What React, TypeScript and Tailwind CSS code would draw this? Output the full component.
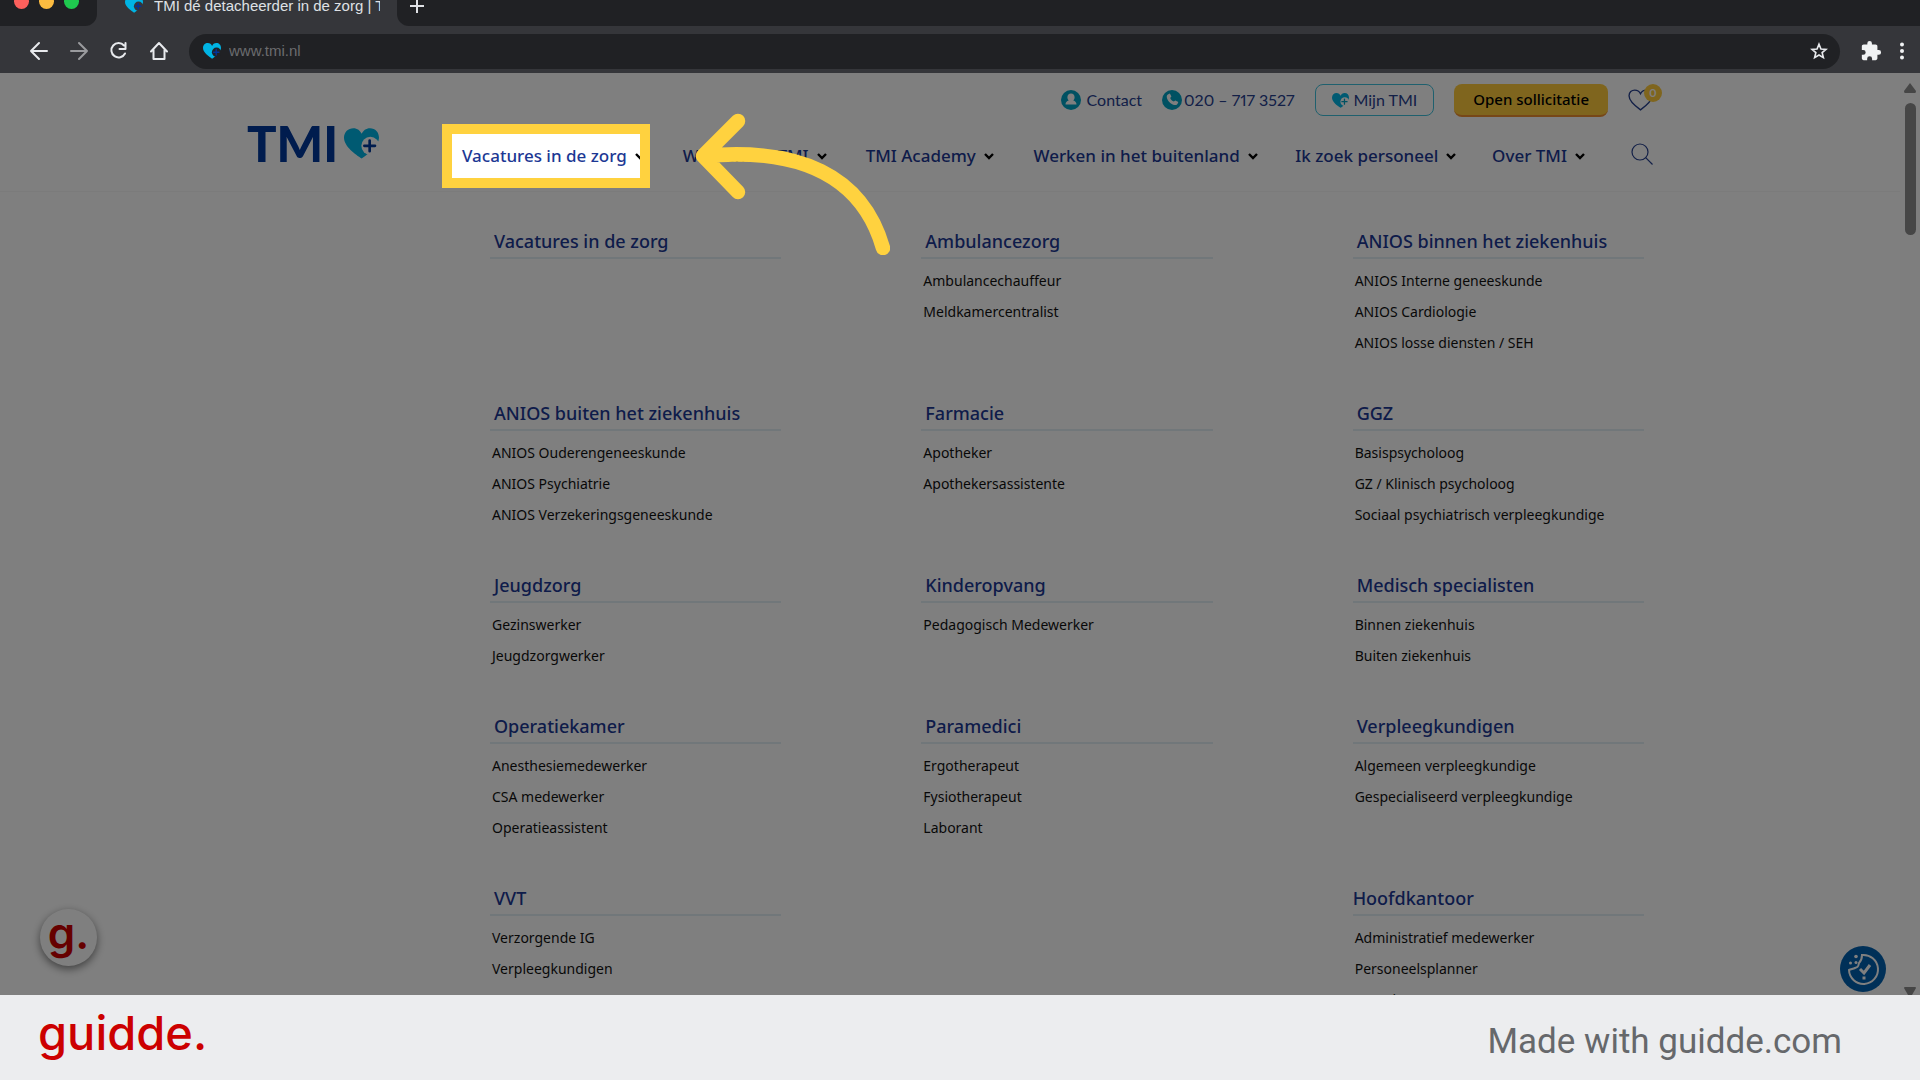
import type { ReactNode } from "react";

const HEART = "M12 21 C5 16 1 12 1 7.5 C1 4 3.500 2 6.500 2 C9 2 11 3.500 12 5.500 C13 3.500 15 2 17.500 2 C20.500 2 23 4 23 7.500 C23 12 19 16 12 21Z";

function Brand({ className, ring, plus }: { className: string; ring: string; plus: string }) {
  return (
    <svg viewBox="0 0 105 92" className={className} aria-hidden="true">
      <path fill="#00b4e4" d="M53 91C35 80 0 55 0 29C0 11 13 0 28 0C40 0 49 7 53 17C57 7 66 0 78 0C94 0 105 12 105 29C105 50 75 78 53 91Z" />
      <circle cx="79" cy="53" r="27" fill={ring} />
      <path d="M77 37v32M61 53h32" stroke={plus} strokeWidth="8" strokeLinecap="round" />
    </svg>
  );
}

function Chevron() {
  return (
    <svg viewBox="0 0 10 7" className="h-[7px] w-[10px] shrink-0" fill="none" stroke="#000" strokeWidth="2.4" aria-hidden="true">
      <path d="M1 1l4 4 4-4" />
    </svg>
  );
}

function ChromeButton({ label, faded, children }: { label: string; faded?: boolean; children: ReactNode }) {
  return (
    <button aria-label={label} className={faded ? "text-[#9a9b9e]" : "text-[#e8eaed]"}>
      <svg viewBox="0 0 20 20" className="size-5" fill="none" stroke="currentColor" strokeWidth="2" strokeLinecap="round" strokeLinejoin="round" aria-hidden="true">
        {children}
      </svg>
    </button>
  );
}

function BrowserChrome() {
  return (
    <div className="shrink-0 bg-[#35363a] font-['Liberation_Sans',sans-serif]">
      <div className="flex h-[26px] overflow-hidden">
        <div className="flex w-[97px] gap-[10px] rounded-br-xl bg-[#202124] pl-[14px]">
          <span className="-mt-[6px] size-[15px] rounded-full bg-[#fc605c]" />
          <span className="-mt-[6px] size-[15px] rounded-full bg-[#fdbc40]" />
          <span className="-mt-[6px] size-[15px] rounded-full bg-[#1fc94f]" />
        </div>
        <div className="flex w-[300px] items-start pl-7">
          <Brand className="-mt-[3px] h-4 w-[18px] shrink-0" ring="#35363a" plus="#003399" />
          <span className="-mt-[5px] ml-[11px] w-[226px] overflow-hidden text-[15px] leading-[22px] whitespace-nowrap text-[#dfe1e5]">TMI dé detacheerder in de zorg | TMI</span>
        </div>
        <div className="flex flex-1 rounded-bl-xl bg-[#202124] pl-3">
          <button aria-label="Nieuw tabblad" className="-mt-[2px] size-4 text-[#dfe1e5]">
            <svg viewBox="0 0 16 16" fill="none" stroke="currentColor" strokeWidth="2"><path d="M8 1v14M1 8h14" /></svg>
          </button>
        </div>
      </div>
      <div className="flex h-[47px] items-center pt-[3px] pr-3 pl-[29px]">
        <div className="flex gap-5">
          <ChromeButton label="Terug"><path d="M18 10H2M10 2L2 10l8 8" /></ChromeButton>
          <ChromeButton label="Vooruit" faded><path d="M2 10h16M10 2l8 8-8 8" /></ChromeButton>
          <ChromeButton label="Vernieuwen"><path d="M15 4.500A7.200 7.200 0 1 0 16 12.500M16.500 2v6h-6" /></ChromeButton>
          <ChromeButton label="Startpagina"><path d="M2 10.500L10 2l8 8.500M4.500 9v9h11V9" /></ChromeButton>
        </div>
        <label className="ml-5 flex h-[35px] flex-1 items-center rounded-full bg-[#202124] pr-3 pl-[14px]">
          <Brand className="h-4 w-[18px]" ring="#202124" plus="#003399" />
          <input aria-label="Adres" defaultValue="www.tmi.nl" className="ml-2 min-w-0 flex-1 bg-transparent text-[15px] text-[#6b6c6f] outline-none" />
          <svg viewBox="0 0 24 24" className="size-[18px]" fill="none" stroke="#e8eaed" strokeWidth="2.200" aria-hidden="true">
            <path d="M12 3l2.600 6.300 6.800.5-5.200 4.400 1.600 6.600L12 17.300 6.200 20.800l1.600-6.600L2.600 9.800l6.800-.5z" />
          </svg>
        </label>
        <button aria-label="Extensies" className="ml-5 text-[#f1f3f4]">
          <svg viewBox="0 0 24 24" className="size-[22px]" fill="currentColor"><path d="M20.500 11H19V7c0-1.100-.9-2-2-2h-4V3.500a2.500 2.500 0 0 0-5 0V5H4c-1.100 0-2 .9-2 2v3.800h1.500a2.700 2.700 0 0 1 0 5.400H2V20c0 1.100.9 2 2 2h3.800v-1.500a2.700 2.700 0 0 1 5.400 0V22H17c1.100 0 2-.9 2-2v-4h1.500a2.500 2.500 0 0 0 0-5z" /></svg>
        </button>
        <button aria-label="Menu" className="ml-[14px] text-[#f1f3f4]">
          <svg viewBox="0 0 12 18" className="h-[18px] w-3" fill="currentColor"><circle cx="6" cy="2.500" r="2" /><circle cx="6" cy="9" r="2" /><circle cx="6" cy="15.500" r="2" /></svg>
        </button>
      </div>
    </div>
  );
}

function TopLinks() {
  return (
    <div className="flex h-[36px] items-center justify-end font-['Lato',sans-serif] text-[16px] text-[#26408f] proportional-nums">
      <a href="#contact" className="flex items-center gap-[6px]">
        <svg viewBox="0 0 20 20" className="size-5" aria-hidden="true">
          <circle cx="10" cy="10" r="10" fill="#00a3c4" />
          <path fill="#fff" d="M10 3.500c2.200 0 3.600 1.700 3.600 3.800 0 1.300-.5 2.400-1.300 3.100 1.900.6 3.200 1.700 3.200 4.100h-11c0-2.400 1.300-3.500 3.200-4.100-.8-.7-1.300-1.800-1.300-3.100 0-2.100 1.400-3.800 3.600-3.800z" />
        </svg>
        Contact
      </a>
      <a href="tel:0207173527" className="ml-5 flex items-center gap-[2px]">
        <svg viewBox="0 0 20 20" className="size-5" aria-hidden="true">
          <circle cx="10" cy="10" r="10" fill="#00a3c4" />
          <path fill="#fff" d="M6.300 4.200l1.600-.6 1.500 3-1.200 1.300c.7 1.700 1.900 2.900 3.700 3.700l1.400-1.200 3 1.500-.7 1.800c-.6 1.200-1.700 1.600-3 1.300-3.900-.8-7-3.900-7.800-7.800-.2-1.300.3-2.500 1.500-3z" />
        </svg>
        020 – 717 3527
      </a>
      <a href="#mijn-tmi" className="ml-5 flex h-[32px] items-center gap-[5px] rounded-lg border border-[#3fc1dc] px-4">
        <Brand className="h-[15px] w-[17px]" ring="#fff" plus="#00a3c4" />
        Mijn TMI
      </a>
      <a href="#open-sollicitatie" className="ml-5 flex h-[33px] items-center rounded-lg border-b-2 border-[#ee8f2e] bg-[#ffcb3c] px-[19px] font-['Noto_Sans',sans-serif] text-[15px] font-medium text-black">Open sollicitatie</a>
      <a href="#favorieten" aria-label="Favorieten" className="relative ml-5">
        <svg viewBox="0 0 24 23" className="h-[24px] w-[25px]" fill="none" stroke="#26408f" strokeWidth="1.300" aria-hidden="true"><path d={HEART} /></svg>
        <span className="absolute -top-1 left-4 flex size-[18px] items-center justify-center rounded-full bg-[#ffcb3c] text-[11px] font-bold text-white">0</span>
      </a>
    </div>
  );
}

const NAV = ["Vacatures in de zorg", "Werken via TMI", "TMI Academy", "Werken in het buitenland", "Ik zoek personeel", "Over TMI"];

function NavItem({ label, active }: { label: string; active?: boolean }) {
  return (
    <div className="relative">
      <button className="flex items-center gap-[8px] font-medium whitespace-nowrap">
        {label}
        <Chevron />
      </button>
      {active && (
        <div className="pointer-events-none absolute -top-5 -left-5 z-20 h-16 w-[208px] border-[10px] border-[#ffd23f] shadow-[0_0_0_3000px_rgba(0,0,0,0.5)]">
          <svg viewBox="0 0 196 142" className="absolute -top-[21px] left-[242px] h-[142px] w-[196px]" fill="none" stroke="#ffd23f" strokeWidth="14.500" strokeLinecap="round" strokeLinejoin="round" aria-hidden="true">
            <path d="M44 8L9 43l35 36M9 43C105 34 168 62 189 135" />
          </svg>
        </div>
      )}
    </div>
  );
}

function SiteHeader() {
  return (
    <header className="flex h-[119px] border-b border-[#f6f6f6] pr-[247px] pl-[247px]">
      <a href="#home" aria-label="TMI" className="mt-10 flex w-[215px] shrink-0 items-start font-['Lato',sans-serif] text-[49px] leading-[60px] font-black text-[#00389c]">
        TMI
        <Brand className="mt-[15px] ml-[6px] h-[31px] w-[35px]" ring="#fff" plus="#00389c" />
      </a>
      <div className="min-w-0 flex-1 pt-[9px]">
        <TopLinks />
        <nav className="mt-[25px] grid grid-cols-[221fr_183fr_168fr_262fr_197fr_139fr_22fr] items-center text-[17px] leading-6 text-[#1c3894]">
          {NAV.map((label, i) => <NavItem key={label} label={label} active={i === 0} />)}
          <button aria-label="Zoeken" className="pb-1">
            <svg viewBox="0 0 22 22" className="size-[22px]" fill="none" stroke="#26408f" strokeWidth="1.200"><circle cx="9" cy="9" r="8" /><path d="M14.700 14.700L21.500 21.500" /></svg>
          </button>
        </nav>
      </div>
    </header>
  );
}

type Group = { title: string; items: string[]; flush?: boolean };

const GROUPS: (Group | null)[] = [
  { title: "Vacatures in de zorg", items: [] },
  { title: "Ambulancezorg", items: ["Ambulancechauffeur", "Meldkamercentralist"] },
  { title: "ANIOS binnen het ziekenhuis", items: ["ANIOS Interne geneeskunde", "ANIOS Cardiologie", "ANIOS losse diensten / SEH"] },
  { title: "ANIOS buiten het ziekenhuis", items: ["ANIOS Ouderengeneeskunde", "ANIOS Psychiatrie", "ANIOS Verzekeringsgeneeskunde"] },
  { title: "Farmacie", items: ["Apotheker", "Apothekersassistente"] },
  { title: "GGZ", items: ["Basispsycholoog", "GZ / Klinisch psycholoog", "Sociaal psychiatrisch verpleegkundige"] },
  { title: "Jeugdzorg", items: ["Gezinswerker", "Jeugdzorgwerker"] },
  { title: "Kinderopvang", items: ["Pedagogisch Medewerker"] },
  { title: "Medisch specialisten", items: ["Binnen ziekenhuis", "Buiten ziekenhuis"] },
  { title: "Operatiekamer", items: ["Anesthesiemedewerker", "CSA medewerker", "Operatieassistent"] },
  { title: "Paramedici", items: ["Ergotherapeut", "Fysiotherapeut", "Laborant"] },
  { title: "Verpleegkundigen", items: ["Algemeen verpleegkundige", "Gespecialiseerd verpleegkundige"] },
  { title: "VVT", items: ["Verzorgende IG", "Verpleegkundigen"] },
  null,
  { title: "Hoofdkantoor", items: ["Administratief medewerker", "Personeelsplanner", "Recruiter"], flush: true },
];

function MegaMenu() {
  return (
    <div className="grid grid-cols-3 gap-x-[140px] gap-y-[39px] pt-[33px] pr-[256px] pl-[490px]">
      {GROUPS.map((group, i) =>
        group ? (
          <section key={group.title}>
            <h2 className={group.flush ? "border-b-2 border-[#e2eff4] text-[18px] leading-8 font-medium text-[#1c3894]" : "border-b-2 border-[#e2eff4] pl-1 text-[18px] leading-8 font-medium text-[#1c3894]"}>{group.title}</h2>
            <ul className="mt-[6px] pl-[2px] text-[14px] leading-[31px] text-[#111]">
              {group.items.map((item) => <li key={item}><a href="#vacatures">{item}</a></li>)}
            </ul>
          </section>
        ) : <div key={i} />
      )}
    </div>
  );
}

function Scrollbar() {
  return (
    <div className="flex w-5 shrink-0 flex-col items-center justify-between bg-[#fcfcfc] pt-[10px]" aria-hidden="true">
      <div className="flex flex-col items-center gap-[10px]">
        <svg viewBox="0 0 12 10" className="h-[10px] w-3" fill="#8c8c8c"><path d="M6 0l6 8q0 2-1 2H1Q0 10 0 8z" /></svg>
        <div className="h-[132px] w-[11px] rounded-full bg-[#8c8c8c]" />
      </div>
      <svg viewBox="0 0 12 8" className="h-2 w-3" fill="#8c8c8c"><path d="M0 1q0-1 1-1h10q1 0 1 1L8 8H4z" /></svg>
    </div>
  );
}

export default function App() {
  return (
    <div className="flex h-screen flex-col overflow-hidden font-['Noto_Sans',sans-serif]">
      <BrowserChrome />
      <main className="relative flex min-h-0 flex-1 overflow-hidden bg-white">
        <div className="min-w-0 flex-1">
          <SiteHeader />
          <MegaMenu />
        </div>
        <Scrollbar />
        <button aria-label="guidde" className="absolute bottom-[29px] left-10 flex size-[57px] items-center justify-center rounded-full bg-white pb-[10px] font-['Inter',sans-serif] text-[44px] leading-none font-semibold text-[#c00] shadow-[0_3px_8px_rgba(0,0,0,0.5)]">g.</button>
        <button aria-label="Cookie-instellingen" className="absolute right-[34px] bottom-[3px] size-[46px]">
          <svg viewBox="0 0 46 46" fill="none">
            <circle cx="23" cy="23" r="23" fill="#0060b0" />
            <path d="M22 9A14.500 14.500 0 1 1 9 24c2-1 4-1 6-2 4-1 3-2 4-5 2-2 3-4 3-8z" stroke="#fff" strokeWidth="2" />
            <path d="M20 23l4 4 6-8" stroke="#fff" strokeWidth="3" />
            <path d="M22.500 30.500h3v3h-3z" fill="#fff" />
            <circle cx="16" cy="10.500" r="1.800" fill="#fff" /><circle cx="10.500" cy="17" r="1.500" fill="#fff" /><circle cx="16" cy="16.500" r="1.500" fill="#fff" />
          </svg>
        </button>
      </main>
      <footer className="flex h-[85px] shrink-0 items-center justify-between bg-[#ecedef] pr-[78px] pl-[38px]">
        <span className="pb-[10px] font-['Inter',sans-serif] text-[47px] leading-[56px] font-medium text-[#c00]">guidde.</span>
        <span className="pt-2 font-['Roboto',sans-serif] text-[35px] leading-10 text-[#66686b]">Made with guidde.com</span>
      </footer>
    </div>
  );
}
